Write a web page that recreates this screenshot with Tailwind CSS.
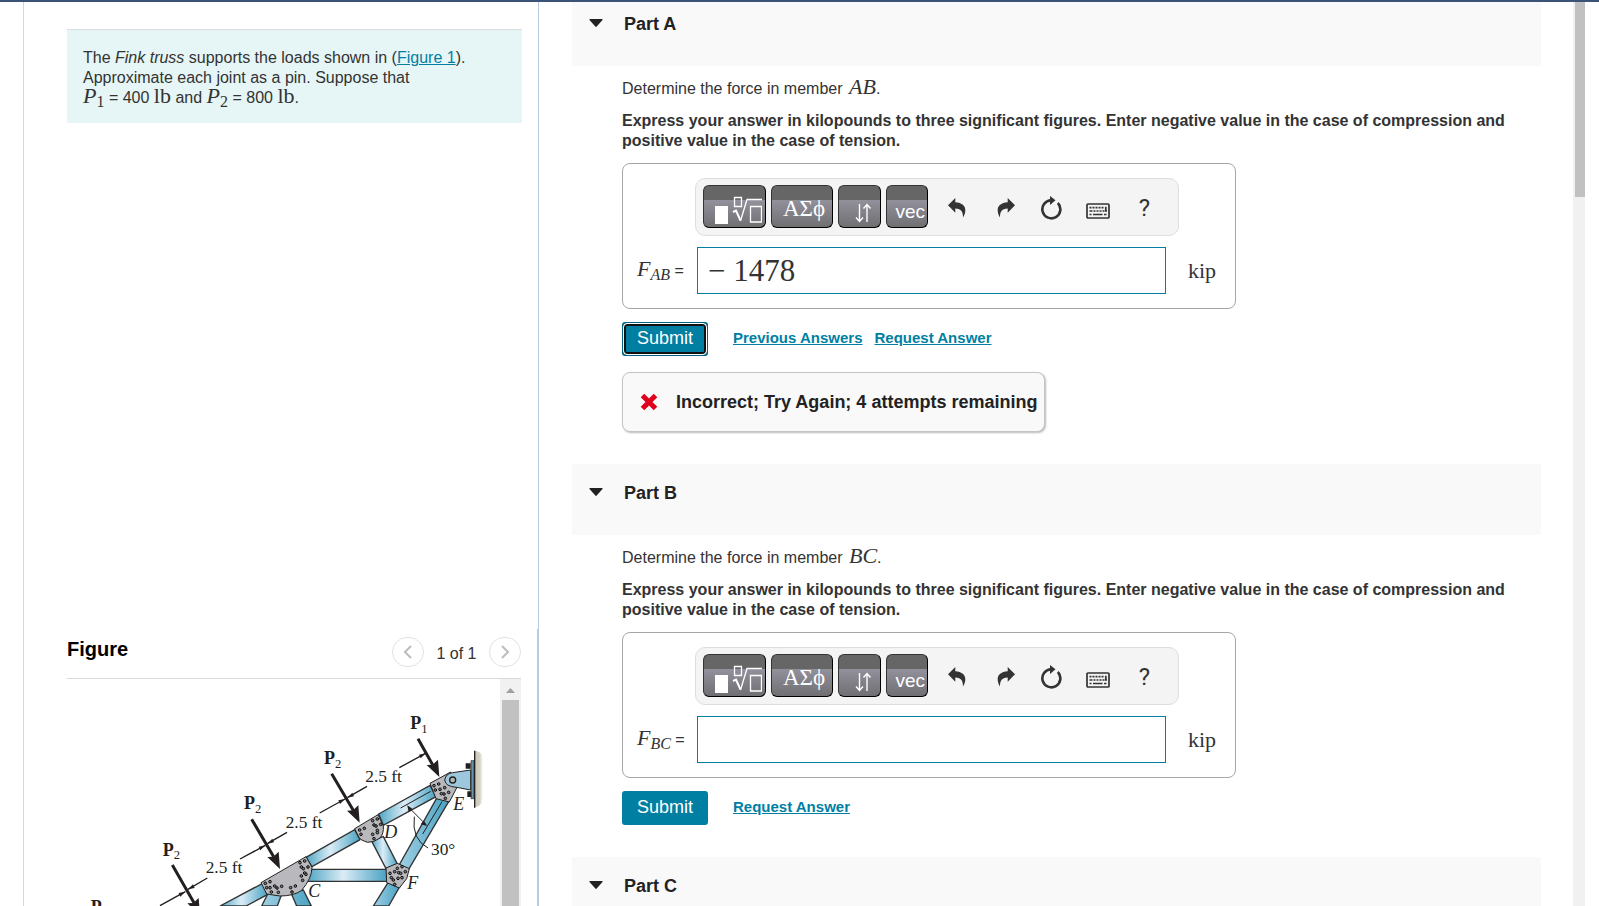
<!DOCTYPE html>
<html lang="en">
<head>
    <meta charset="UTF-8">
    <meta name="viewport" content="width=device-width, initial-scale=1.0">
    <title>Fink Truss</title>
    <script src="https://cdn.jsdelivr.net/npm/@tailwindcss/browser@4"></script>
</head>
<body class="h-screen overflow-hidden bg-white font-['Liberation_Sans',sans-serif] text-base leading-5 text-[#333]">
    <!-- Shared icons -->
    <svg class="hidden">
        <symbol id="icon-caret" viewBox="0 0 14 8"><path d="M1 0h12q1 .3.5 1L7.700 7.600q-.7.6-1.400 0L.5 1Q0 .3 1 0z" fill="#222"/></symbol>
        <symbol id="icon-undo" viewBox="0 0 18 20"><path d="M0 7.300 7.300 0v4.300C14 4.800 17.500 8 17.300 12.500c0 2.500-.8 4.700-2.300 7C15 14 13.500 10.600 7.300 10.500v4.200z" fill="#333"/></symbol>
        <symbol id="icon-reset" viewBox="0 0 22 24"><path d="M17.800 7A9 9 0 1 1 11 4.300" fill="none" stroke="#333" stroke-width="2.600"/><path d="M10 0 15.500 4.300 10 9z" fill="#333"/></symbol>
        <symbol id="icon-keyboard" viewBox="0 0 24 16">
            <rect x="1" y="1" width="22" height="14" rx="1" fill="none" stroke="#333" stroke-width="1.700"/>
            <path d="M3.500 4.700h2m1 0h2m1 0h2m1 0h2m1 0h2" stroke="#333" stroke-width="1.700"/>
            <path d="M3.500 8h3m1 0h2m1 0h2m1 0h2m1 0h2m1 0h1.500M19.800 3.800V8.800" stroke="#333" stroke-width="1.700"/>
            <path d="M3.500 11.500h2m1.500 0h9.500m1.500 0h2.500" stroke="#333" stroke-width="1.700"/>
        </symbol>
        <symbol id="icon-root" viewBox="0 0 48 28">
            <path d="M1 10h13v18H1z" fill="#fff"/>
            <path d="M20.500 1.500h7v9h-7zM36.500 10.500h11v15.500h-11z" fill="none" stroke="#fff" stroke-width="1.300"/>
            <path d="M19 16l3-1.500 4.500 10" fill="none" stroke="#fff" stroke-width="2"/><path d="M26.500 25 33 3.500h15" fill="none" stroke="#fff" stroke-width="1.300"/>
        </symbol>
        <symbol id="icon-updown" viewBox="0 0 18 20">
            <path d="M5.500 1v17M2 14.500 5.500 18.500 9 14.500M13 19V2M9.500 5.500 13 1.500 16.500 5.500" fill="none" stroke="#fff" stroke-width="1.400"/>
        </symbol>
        <symbol id="icon-wrong" viewBox="0 0 18 18"><path d="M2.500 2.500 15.500 15.500M15.500 2.500 2.500 15.500" stroke="#e0001b" stroke-width="5"/></symbol>
    </svg>

    <div class="flex h-full flex-col">
        <div class="h-0.5 shrink-0 bg-[#3b5376]"></div>
        <div class="flex min-h-0 flex-1">

            <!-- Problem statement and figure -->
            <aside class="ml-[23px] flex w-[516px] shrink-0 flex-col border-x border-l-[#d6d6d6] border-r-[#b9cbdf] pt-[27px]">
                <div class="ml-[43px] mr-4 h-[94px] border-t border-[#d9dedd] bg-[#e6f6f6] px-4 pt-[18px]">
                    <p>The <i>Fink truss</i> supports the loads shown in (<a href="#figure" class="text-[#007fa3] underline">Figure 1</a>). Approximate each joint as a pin. Suppose that<br>
                    <span class="font-['Liberation_Serif',serif] text-[22px] leading-0"><i>P</i><sub class="text-base leading-0">1</sub></span> = 400 <span class="font-['Liberation_Serif',serif] text-[22px] leading-0">lb</span> and <span class="font-['Liberation_Serif',serif] text-[22px] leading-0"><i>P</i><sub class="text-base leading-0">2</sub></span> = 800 <span class="font-['Liberation_Serif',serif] text-[22px] leading-0">lb</span>.</p>
                </div>

                <div id="figure" class="mt-auto flex h-[277px] flex-col border-r border-[#b9cbdf] pl-[43px] pr-4">
                    <div class="flex h-[50px] shrink-0 items-center border-b border-[#d9d9d9] pb-[3px]">
                        <h2 class="mr-auto pb-[7px] text-xl font-bold text-black">Figure</h2>
                        <button aria-label="Previous figure" class="flex h-[30px] w-8 items-center justify-center rounded-full border border-[#e2e2e2]">
                            <svg class="h-4 w-3" viewBox="0 0 12 16"><path d="M9 2 3 8l6 6" fill="none" stroke="#bdbdbd" stroke-width="2"/></svg>
                        </button>
                        <span class="w-[65px] pt-1 text-center">1 of 1</span>
                        <button aria-label="Next figure" class="flex h-[30px] w-8 items-center justify-center rounded-full border border-[#e2e2e2]">
                            <svg class="h-4 w-3" viewBox="0 0 12 16"><path d="M3 2l6 6-6 6" fill="none" stroke="#bdbdbd" stroke-width="2"/></svg>
                        </button>
                    </div>
                    <div class="flex min-h-0 flex-1">
                        <svg class="h-[227px] w-[433px] shrink-0" viewBox="21 177 1299 681" font-family="Liberation Serif, serif" fill="#231f20">
                            <defs>
                                <linearGradient id="steel"><stop offset="0" stop-color="#4fa6c5"/><stop offset=".45" stop-color="#dcecf6"/><stop offset="1" stop-color="#4aa3c3"/></linearGradient>
                                <linearGradient id="steelDark"><stop offset="0" stop-color="#9fd0e4"/><stop offset="1" stop-color="#4aa3c3"/></linearGradient>
                                <linearGradient id="wall"><stop offset="0" stop-color="#c9c6b5"/><stop offset=".6" stop-color="#d6d3c5"/><stop offset="1" stop-color="#fff"/></linearGradient>
                                <g id="bolts"><circle r="4"/><circle cx="14" cy="-5" r="4"/><circle cx="4" cy="13" r="4"/></g>
                                <path id="head" d="M0 0-38-36-20-37-4-52z"/>
                                <path id="tick" d="M0 0-20 4-15 15z"/>
                            </defs>
                            <!-- Wall and pin support -->
                            <path d="M1245 392q24 2 24 30v110q0 26-24 30z" fill="url(#wall)"/>
                            <path d="M1233 422h9v114h-9z" fill="#6893ab" stroke="#222" stroke-width="2"/>
                            <path d="M1244 392v171" stroke="#222" stroke-width="4"/>
                            <path d="M1217 430h15v16h-15zM1222 514h12v17h-12z"/>
                            <!-- Members -->
                            <g stroke="#333" stroke-width="4">
                                <path d="M480 858 608 790 622 824 558 858z" fill="url(#steel)"/>
                                <path d="M605 858 624 820h42l-14 38zM692 816l38-6 24 48h-44z" fill="url(#steelDark)"/>
                                <path d="M738 712 884 629 900 659 756 740z" fill="url(#steel)"/>
                                <path d="M752 748H980V784H742z" fill="url(#steel)"/>
                                <path d="M934 662 970 650 1012 732 978 746z" fill="url(#steel)"/>
                                <path d="M956 582 1110 496 1128 530 970 616z" fill="url(#steel)"/>
                                <path d="M1131 533 1166 545 1046 748 1018 734z" fill="url(#steelDark)"/>
                                <path d="M940 858 984 788 1018 802 986 858z" fill="url(#steelDark)"/>
                            </g>
                            <!-- Gusset plates -->
                            <g fill="#b9b9bd" stroke="#222" stroke-width="3">
                                <path d="M603 788 738 710 756 742Q756 775 724 812 700 828 660 828 632 824 620 822z"/>
                                <path d="M884 626 954 584 970 618Q972 640 960 654 942 668 922 667 902 660 898 654z"/>
                                <path d="M978 744 1012 730 1048 746 1040 776 1018 804 980 788z"/>
                                <path d="M1110 490 1172 456 1192 500 1168 546 1128 536z"/>
                            </g>
                            <path d="M1178 458 1232 450V510L1190 502Q1156 500 1154 480 1158 460 1178 458z" fill="#9cc7dd" stroke="#222" stroke-width="3"/>
                            <circle cx="1178" cy="480" r="9" fill="#b7b7b7" stroke="#222" stroke-width="4"/>
                            <g fill="#777" stroke="#111" stroke-width="3">
                                <use href="#bolts" x="616" y="790"/><use href="#bolts" x="630" y="803"/><use href="#bolts" x="651" y="804"/><use href="#bolts" x="692" y="803"/>
                                <use href="#bolts" x="720" y="728"/><use href="#bolts" x="730" y="746"/><use href="#bolts" x="724" y="768"/>
                                <use href="#bolts" x="899" y="630"/><use href="#bolts" x="938" y="602"/><use href="#bolts" x="948" y="618"/><use href="#bolts" x="938" y="643"/>
                                <use href="#bolts" x="990" y="760"/><use href="#bolts" x="1012" y="745"/><use href="#bolts" x="1022" y="760"/><use href="#bolts" x="1000" y="780"/>
                                <use href="#bolts" x="1122" y="497"/><use href="#bolts" x="1140" y="508"/><use href="#bolts" x="1152" y="522"/>
                            </g>
                            <!-- Angle marks -->
                            <g fill="none" stroke="#231f20" stroke-width="3">
                                <path d="M1022 564 1112 514M1088 642 1146 545M1044 560 1098 614M1063 590Q1054 658 1104 684"/>
                            </g>
                            <path d="M1042 556 1046 577 1057 566zM1101 618 1082 613 1092 602z"/>
                            <!-- Loads -->
                            <g stroke="#231f20" stroke-width="9">
                                <path d="M1074 356 1120 438M815 461 881 573M575 598 641 710M337 735 402 848"/>
                            </g>
                            <use href="#head" x="1138" y="471"/><use href="#head" x="899" y="608"/><use href="#head" x="660" y="747"/><use href="#head" x="420" y="886"/>
                            <!-- Dimension lines -->
                            <g stroke="#231f20" stroke-width="4">
                                <path d="M1018 443 1095 401M862 533 921 499M779 579 855 537M622 671 681 637M540 717 616 676M384 808 442 774M300 857 376 815"/>
                            </g>
                            <use href="#tick" x="1097" y="400"/><use href="#tick" x="855" y="537"/><use href="#tick" x="616" y="676"/><use href="#tick" x="376" y="815"/>
                            <use href="#tick" transform="translate(862 533) rotate(180)"/><use href="#tick" transform="translate(622 671) rotate(180)"/><use href="#tick" transform="translate(384 808) rotate(180)"/>
                            <!-- Labels -->
                            <g font-size="52">
                                <text x="916" y="486">2.5 ft</text><text x="677" y="625">2.5 ft</text><text x="437" y="760">2.5 ft</text><text x="1113" y="706">30°</text>
                            </g>
                            <g font-size="54" font-style="italic">
                                <text x="1180" y="569">E</text><text x="973" y="654">D</text><text x="1042" y="808">F</text><text x="745" y="831">C</text>
                            </g>
                            <g font-size="54" font-weight="bold">
                                <text x="1051" y="328">P<tspan font-size="38" font-weight="normal" dy="11">1</tspan></text>
                                <text x="792" y="433">P<tspan font-size="38" font-weight="normal" dy="11">2</tspan></text>
                                <text x="552" y="568">P<tspan font-size="38" font-weight="normal" dy="11">2</tspan></text>
                                <text x="308" y="707">P<tspan font-size="38" font-weight="normal" dy="11">2</tspan></text>
                                <text x="92" y="879">P</text>
                            </g>
                        </svg>
                        <div class="flex w-[21px] flex-col items-center bg-[#f1f1f1]">
                            <svg class="my-[6px] h-[9px] w-[9px] shrink-0" viewBox="0 0 9 9"><path d="M0 8 4.500 3 9 8z" fill="#a0a0a0"/></svg>
                            <div class="w-[17px] flex-1 bg-[#c1c1c1]"></div>
                        </div>
                    </div>
                </div>
            </aside>

            <!-- Parts -->
            <main class="min-w-0 flex-1 overflow-hidden pl-[33px] pr-8">
                <section class="-mt-[7px]">
                    <h2 class="flex h-[71px] items-start gap-[21px] bg-[#f9f9f9] pl-[17px] pt-[19px] text-lg font-bold leading-5 text-[#222]">
                        <svg class="mt-[5px] h-2 w-[14px]"><use href="#icon-caret"/></svg>Part A
                    </h2>
                    <div class="pl-[50px] pr-4 pt-[13px]">
                        <p>Determine the force in member <i class="pl-0.5 font-['Liberation_Serif',serif] text-[22px] leading-0">AB</i>.</p>
                        <p class="mt-3 font-bold">Express your answer in kilopounds to three significant figures. Enter negative value in the case of compression and positive value in the case of tension.</p>
                        <div class="mt-3 w-[614px] rounded-lg border border-[#a6a6a6] py-[14px]">
                            <div class="ml-[72px] flex h-[58px] w-[484px] items-start rounded-[10px] border border-[#dedede] bg-[#f4f4f4] pl-[7px] pt-1.5">
                                <div class="flex gap-[5px]">
                                    <button aria-label="Templates" class="flex h-[43px] w-[63px] items-end justify-end rounded-md border border-[#333] border-b-black border-r-black bg-linear-to-b from-[#666] from-35% via-[#92909b] via-35% to-[#707073] pb-[3px] pr-[3px]"><svg class="h-7 w-12"><use href="#icon-root"/></svg></button>
                                    <button class="flex h-[43px] w-[62px] items-end justify-end rounded-md border border-[#333] border-b-black border-r-black bg-linear-to-b from-[#666] from-35% via-[#92909b] via-35% to-[#707073] pb-1.5 pr-[7px] font-['Liberation_Serif',serif] text-[23px] leading-6 text-white">ΑΣϕ</button>
                                    <button aria-label="Arrows" class="flex h-[43px] w-[43px] items-end justify-end rounded-md border border-[#333] border-b-black border-r-black bg-linear-to-b from-[#666] from-35% via-[#92909b] via-35% to-[#707073] pb-1 pr-2"><svg class="h-5 w-[18px]"><use href="#icon-updown"/></svg></button>
                                    <button class="flex h-[43px] w-[42px] items-end justify-end rounded-md border border-[#333] border-b-black border-r-black bg-linear-to-b from-[#666] from-35% via-[#92909b] via-35% to-[#707073] pb-[5px] pr-0.5 text-[19px] leading-5 text-white">vec</button>
                                </div>
                                <div class="ml-[5px] flex h-[43px] *:flex *:w-[47px] *:items-center *:justify-center">
                                    <button aria-label="Undo" class="pt-0.5"><svg class="h-5 w-[18px]"><use href="#icon-undo"/></svg></button>
                                    <button aria-label="Redo" class="pt-0.5"><svg class="ml-1 h-5 w-[18px] -scale-x-100"><use href="#icon-undo"/></svg></button>
                                    <button aria-label="Reset" class="pt-0.5"><svg class="h-6 w-[22px]"><use href="#icon-reset"/></svg></button>
                                    <button aria-label="Keyboard" class="pt-2"><svg class="h-4 w-6"><use href="#icon-keyboard"/></svg></button>
                                    <button aria-label="Help" class="pt-0.5 font-[Roboto,sans-serif] text-2xl leading-6">?</button>
                                </div>
                            </div>
                            <div class="mt-[11px] flex items-center">
                                <label for="fab" class="w-[74px] whitespace-nowrap pb-0.5 pl-[14px]"><i class="font-['Liberation_Serif',serif] text-[22px]">F<sub class="text-base leading-none">AB</sub></i> =</label>
                                <input id="fab" type="text" value="− 1478" class="h-[47px] w-[469px] border border-[#007fa3] px-2.5 font-['Liberation_Serif',serif] text-[31px]">
                                <span class="ml-[22px] font-['Liberation_Serif',serif] text-[22px]">kip</span>
                            </div>
                        </div>
                        <div class="mt-[13px] flex items-center">
                            <button class="h-[34px] w-[86px] rounded-[3px] border-2 border-[#046380] bg-[#007fa3] p-0 ring-2 ring-inset ring-white">
                                <span class="flex h-full items-center justify-center rounded-[3px] border-2 border-[#101010] pb-0.5 text-lg leading-5 text-white outline-1 outline-white">Submit</span>
                            </button>
                            <a href="#" class="ml-[25px] pb-0.5 text-[15px] font-bold text-[#007fa3] underline">Previous Answers</a>
                            <a href="#" class="ml-3 pb-0.5 text-[15px] font-bold text-[#007fa3] underline">Request Answer</a>
                        </div>
                        <div class="mt-4 flex h-[60px] w-[423px] items-center rounded-lg border border-[#c4c4c4] bg-[#f9f9f9] pl-[17px] text-lg font-bold text-[#222] shadow-[1px_1px_2px_#bbb]">
                            <svg class="mr-[18px] h-[18px] w-[18px]"><use href="#icon-wrong"/></svg>Incorrect; Try Again; 4 attempts remaining
                        </div>
                    </div>
                </section>

                <section class="mt-8">
                    <h2 class="flex h-[71px] items-start gap-[21px] bg-[#f9f9f9] pl-[17px] pt-[19px] text-lg font-bold leading-5 text-[#222]">
                        <svg class="mt-[5px] h-2 w-[14px]"><use href="#icon-caret"/></svg>Part B
                    </h2>
                    <div class="pl-[50px] pr-4 pt-[13px]">
                        <p>Determine the force in member <i class="pl-0.5 font-['Liberation_Serif',serif] text-[22px] leading-0">BC</i>.</p>
                        <p class="mt-3 font-bold">Express your answer in kilopounds to three significant figures. Enter negative value in the case of compression and positive value in the case of tension.</p>
                        <div class="mt-3 w-[614px] rounded-lg border border-[#a6a6a6] py-[14px]">
                            <div class="ml-[72px] flex h-[58px] w-[484px] items-start rounded-[10px] border border-[#dedede] bg-[#f4f4f4] pl-[7px] pt-1.5">
                                <div class="flex gap-[5px]">
                                    <button aria-label="Templates" class="flex h-[43px] w-[63px] items-end justify-end rounded-md border border-[#333] border-b-black border-r-black bg-linear-to-b from-[#666] from-35% via-[#92909b] via-35% to-[#707073] pb-[3px] pr-[3px]"><svg class="h-7 w-12"><use href="#icon-root"/></svg></button>
                                    <button class="flex h-[43px] w-[62px] items-end justify-end rounded-md border border-[#333] border-b-black border-r-black bg-linear-to-b from-[#666] from-35% via-[#92909b] via-35% to-[#707073] pb-1.5 pr-[7px] font-['Liberation_Serif',serif] text-[23px] leading-6 text-white">ΑΣϕ</button>
                                    <button aria-label="Arrows" class="flex h-[43px] w-[43px] items-end justify-end rounded-md border border-[#333] border-b-black border-r-black bg-linear-to-b from-[#666] from-35% via-[#92909b] via-35% to-[#707073] pb-1 pr-2"><svg class="h-5 w-[18px]"><use href="#icon-updown"/></svg></button>
                                    <button class="flex h-[43px] w-[42px] items-end justify-end rounded-md border border-[#333] border-b-black border-r-black bg-linear-to-b from-[#666] from-35% via-[#92909b] via-35% to-[#707073] pb-[5px] pr-0.5 text-[19px] leading-5 text-white">vec</button>
                                </div>
                                <div class="ml-[5px] flex h-[43px] *:flex *:w-[47px] *:items-center *:justify-center">
                                    <button aria-label="Undo" class="pt-0.5"><svg class="h-5 w-[18px]"><use href="#icon-undo"/></svg></button>
                                    <button aria-label="Redo" class="pt-0.5"><svg class="ml-1 h-5 w-[18px] -scale-x-100"><use href="#icon-undo"/></svg></button>
                                    <button aria-label="Reset" class="pt-0.5"><svg class="h-6 w-[22px]"><use href="#icon-reset"/></svg></button>
                                    <button aria-label="Keyboard" class="pt-2"><svg class="h-4 w-6"><use href="#icon-keyboard"/></svg></button>
                                    <button aria-label="Help" class="pt-0.5 font-[Roboto,sans-serif] text-2xl leading-6">?</button>
                                </div>
                            </div>
                            <div class="mt-[11px] flex items-center">
                                <label for="fbc" class="w-[74px] whitespace-nowrap pb-0.5 pl-[14px]"><i class="font-['Liberation_Serif',serif] text-[22px]">F<sub class="text-base leading-none">BC</sub></i> =</label>
                                <input id="fbc" type="text" class="h-[47px] w-[469px] border border-[#007fa3] px-2.5 font-['Liberation_Serif',serif] text-[31px]">
                                <span class="ml-[22px] font-['Liberation_Serif',serif] text-[22px]">kip</span>
                            </div>
                        </div>
                        <div class="mt-[13px] flex items-center">
                            <button class="h-[34px] w-[86px] rounded-[3px] bg-[#007fa3] pb-0.5 text-lg leading-5 text-white">Submit</button>
                            <a href="#" class="ml-[25px] pb-0.5 text-[15px] font-bold text-[#007fa3] underline">Request Answer</a>
                        </div>
                    </div>
                </section>

                <section class="mt-8">
                    <h2 class="flex h-[71px] items-start gap-[21px] bg-[#f9f9f9] pl-[17px] pt-[19px] text-lg font-bold leading-5 text-[#222]">
                        <svg class="mt-[5px] h-2 w-[14px]"><use href="#icon-caret"/></svg>Part C
                    </h2>
                </section>
            </main>

            <!-- Page scrollbar -->
            <div class="mr-[14px] flex w-3 shrink-0 justify-end bg-[#f1f1f1]">
                <div class="h-[195px] w-2.5 bg-[#c1c1c1]"></div>
            </div>
        </div>
    </div>
</body>
</html>
